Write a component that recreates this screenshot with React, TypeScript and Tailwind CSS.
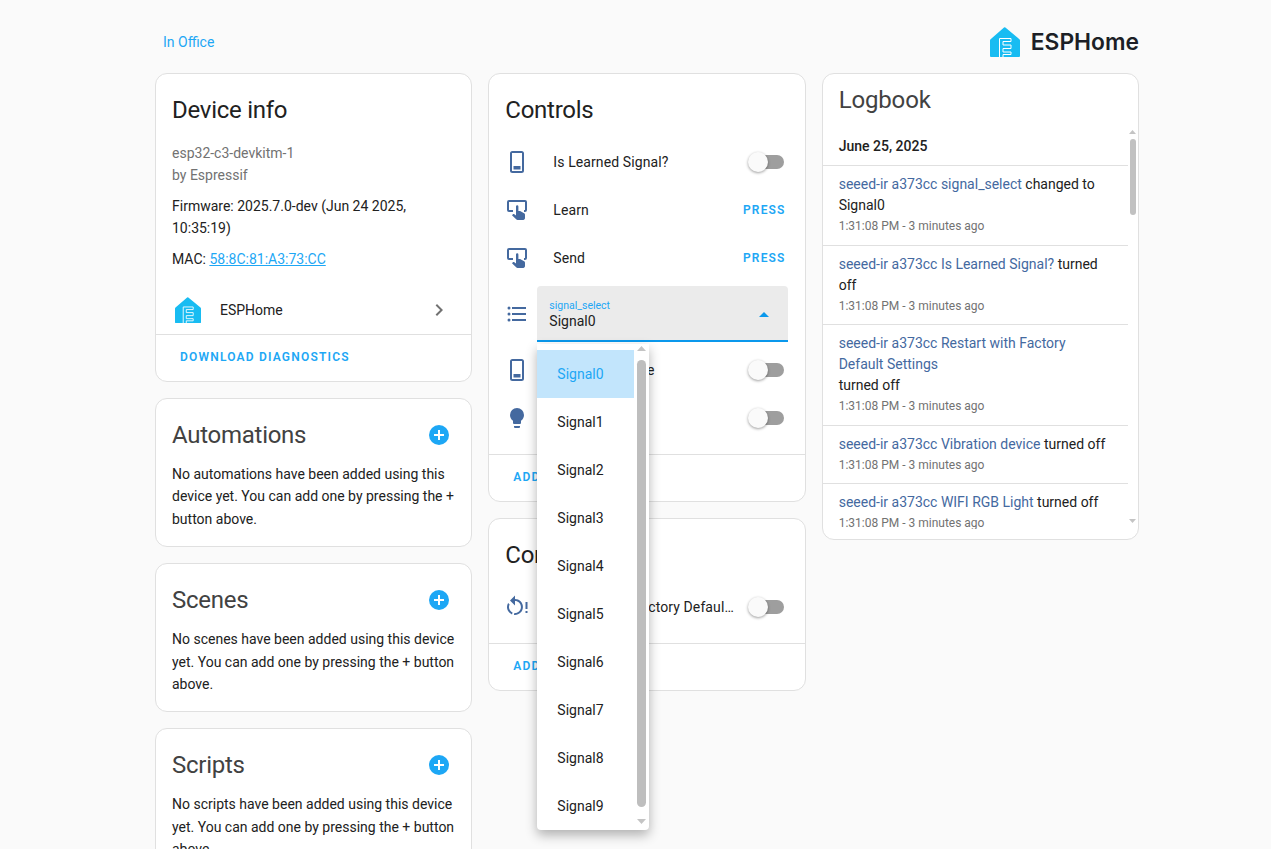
import React from 'react';

const BLUE = '#1da7f5';

const PHONE = 'M7.5 1h9A2.5 2.5 0 0 1 19 3.5v17a2.5 2.5 0 0 1-2.5 2.5h-9A2.5 2.5 0 0 1 5 20.500v-17A2.500 2.500 0 0 1 7.500 1zM7 3v18h10V3H7zM8.500 16h7V19.500h-7z';
const TAP =
  'M4 2h16a2 2 0 0 1 2 2v8a2 2 0 0 1-2 2h-1v-2h1V4H4v8h4v2H4a2 2 0 0 1-2-2V4a2 2 0 0 1 2-2zM11 8.500a1.200 1.200 0 0 1 2.400 0v4.400l1.700.2 4 2.200c.6.300.9.800.9 1.400v3.400c0 1-.7 1.900-1.700 1.900h-5.800c-.4 0-.8-.2-1.100-.5l-4.400-4.300.9-.9c.2-.2.5-.3.800-.3h.3L11 17.500v-9z';
const LIST =
  'M7,5H21V7H7V5M7,13V11H21V13H7M4,4.500A1.500,1.500 0 0,1 5.500,6A1.500,1.500 0 0,1 4,7.500A1.500,1.500 0 0,1 2.500,6A1.500,1.500 0 0,1 4,4.500M4,10.500A1.500,1.500 0 0,1 5.500,12A1.500,1.500 0 0,1 4,13.500A1.500,1.500 0 0,1 2.500,12A1.500,1.500 0 0,1 4,10.500M7,19V17H21V19H7M4,16.500A1.500,1.500 0 0,1 5.500,18A1.500,1.500 0 0,1 4,19.500A1.500,1.500 0 0,1 2.500,18A1.500,1.500 0 0,1 4,16.500Z';
const BULB =
  'M12,2A7,7 0 0,0 5,9C5,11.380 6.190,13.470 8,14.740V17A1,1 0 0,0 9,18H15A1,1 0 0,0 16,17V14.740C17.810,13.470 19,11.380 19,9A7,7 0 0,0 12,2M9,21A1,1 0 0,0 10,22H14A1,1 0 0,0 15,21V20H9V21Z';
const RESTART =
  'M10,4C12.100,4 14.100,4.800 15.600,6.300C18.700,9.400 18.700,14.500 15.600,17.600C13.800,19.500 11.300,20.200 8.900,19.900L9.400,17.900C11.100,18.100 12.900,17.500 14.200,16.200C16.500,13.900 16.500,10.100 14.200,7.700C13.100,6.600 11.500,6 10,6V10.600L5,5.600L10,0.600V4M4.300,17.600C1.700,15 1.300,11 3.100,7.900L4.600,9.400C3.500,11.600 3.900,14.400 5.800,16.200C6.300,16.700 6.900,17.100 7.600,17.400L7,19.400C6,19 5.100,18.400 4.300,17.600ZM20.500,7H22.500V14H20.500ZM20.500,16H22.500V18H20.500Z';

const Icon = ({ d }: { d: string }) => (
  <svg viewBox="0 0 24 24" className="w-6 h-6 shrink-0" fill="#44699f" fillRule="evenodd">
    <path d={d} />
  </svg>
);

const Logo = ({ className }: { className: string }) => (
  <svg viewBox="0 0 30 30" className={className}>
    <path
      d="M14 0.500Q14.700 0 15.400 0.500L29.400 12.200Q30 12.700 30 13.500V29a1 1 0 0 1-1 1H1a1 1 0 0 1-1-1V13.500Q0 12.700 .6 12.200z"
      fill="#18bcf2"
    />
    <path
      d="M9.500 30V11.500H21V14.500H13V18H21V21.500H13V25H21V27.500H13V30"
      fill="none"
      stroke="#fff"
      strokeWidth="1"
    />
  </svg>
);

const Toggle = () => (
  <div className="relative w-9 h-5 mr-[2px] flex items-center justify-end shrink-0">
    <div className="w-[31px] h-3.5 rounded-full bg-[#9e9e9e]" />
    <div className="absolute left-0 top-0 w-5 h-5 rounded-full bg-[#fafafa] shadow-[0_1px_3px_rgba(0,0,0,0.4)]" />
  </div>
);

const Card = ({ children, className = '' }: { children: React.ReactNode; className?: string }) => (
  <div className={`bg-white border border-[#e0e0e0] rounded-xl ${className}`}>{children}</div>
);

const TextButton = ({ children }: { children: React.ReactNode }) => (
  <span className="text-xs font-semibold tracking-[1.2px] uppercase text-[#1da7f5]">{children}</span>
);

const Row = ({ d, label, right }: { d: string; label: string; right: React.ReactNode }) => (
  <div className="h-12 flex items-center pl-4 pr-[19px]">
    <Icon d={d} />
    <span className="ml-6 flex-1 min-w-0 truncate tracking-[0.1px] text-[#212121]">{label}</span>
    {right}
  </div>
);

const Footer = ({ label }: { label: string }) => (
  <div className="border-t border-[#e0e0e0] h-[47px] pb-[2px] flex items-center px-6">
    <TextButton>{label}</TextButton>
  </div>
);

const EmptyCard = ({ title, text }: { title: string; text: string }) => (
  <Card className="px-4 pt-[20px] pb-4">
    <div className="flex items-center justify-between pr-[6px]">
      <h2 className="text-2xl leading-8 tracking-[-0.27px] text-[#424242]">{title}</h2>
      <svg viewBox="0 0 20 20" className="w-5 h-5">
        <circle cx="10" cy="10" r="10" fill={BLUE} />
        <path d="M9 5h2v4h4v2h-4v4H9v-4H5V9h4z" fill="#fff" />
      </svg>
    </div>
    <p className="mt-[12px] leading-[22.400px] text-[#212121]">{text}</p>
  </Card>
);

const signals = ['Signal0', 'Signal1', 'Signal2', 'Signal3', 'Signal4', 'Signal5', 'Signal6', 'Signal7', 'Signal8', 'Signal9'];

const logEntries = [
  { link: 'seeed-ir a373cc signal_select', rest: ' changed to', extra: 'Signal0' },
  { link: 'seeed-ir a373cc Is Learned Signal?', rest: ' turned', extra: 'off' },
  { link: 'seeed-ir a373cc Restart with Factory Default Settings', rest: '', extra: 'turned off' },
  { link: 'seeed-ir a373cc Vibration device', rest: ' turned off', extra: '' },
  { link: 'seeed-ir a373cc WIFI RGB Light', rest: ' turned off', extra: '' },
];

export default function App() {
  return (
    <div className="h-screen overflow-hidden bg-[#fafafa] font-['Roboto',sans-serif] text-sm">
      <div className="ml-[155px] w-[984px]">
        <header className="h-[73px] flex items-center justify-between pl-2 pt-[11px]">
          <span className="text-[#1da7f5]">In Office</span>
          <div className="flex items-center gap-[11px] -mt-[1px]">
            <Logo className="w-[30px] h-[30px]" />
            <span className="font-['Inter',sans-serif] text-[22.800px] leading-none mt-[1px] font-semibold text-[#1c1f26]">
              ESPHome
            </span>
          </div>
        </header>

        <div className="grid grid-cols-3 gap-4 items-start">
          <div className="flex flex-col gap-4">
            <Card>
              <div className="px-4 pt-5 pb-[9px]">
                <h2 className="text-2xl leading-8 tracking-[-0.27px] text-[#212121]">Device info</h2>
                <p className="mt-[16px] leading-[22px] text-[#727272]">
                  esp32-c3-devkitm-1
                  <br />
                  by Espressif
                </p>
                <p className="mt-[8.500px] leading-[22.500px] text-[#212121]">Firmware: 2025.7.0-dev (Jun 24 2025, 10:35:19)</p>
                <p className="mt-[8.500px] leading-[23px] text-[#212121]">
                  MAC: <span className="underline text-[#1da7f5]">58:8C:81:A3:73:CC</span>
                </p>
              </div>
              <div className="h-12 flex items-center pl-[19px] pr-[20px] mt-[6px]">
                <Logo className="w-[26px] h-[26px]" />
                <span className="ml-[19px] flex-1 text-[#212121]">ESPHome</span>
                <svg viewBox="0 0 24 24" className="w-6 h-6" fill="#727272">
                  <path d="M8.590,16.580L13.170,12L8.590,7.410L10,6L16,12L10,18L8.590,16.580Z" />
                </svg>
              </div>
              <Footer label="Download diagnostics" />
            </Card>
            <EmptyCard title="Automations" text="No automations have been added using this device yet. You can add one by pressing the + button above." />
            <EmptyCard title="Scenes" text="No scenes have been added using this device yet. You can add one by pressing the + button above." />
            <EmptyCard title="Scripts" text="No scripts have been added using this device yet. You can add one by pressing the + button above." />
          </div>

          <div className="flex flex-col gap-4">
            <Card>
              <h2 className="px-4 pt-5 pb-[12px] text-2xl leading-8 tracking-[-0.27px] text-[#212121]">Controls</h2>
              <Row d={PHONE} label="Is Learned Signal?" right={<Toggle />} />
              <Row d={TAP} label="Learn" right={<TextButton>Press</TextButton>} />
              <Row d={TAP} label="Send" right={<TextButton>Press</TextButton>} />
              <div className="flex items-center pl-4 pr-[17px] py-1">
                <Icon d={LIST} />
                <div className="relative ml-2 flex-1 h-14 bg-[#ebebeb] rounded-t border-b-2 border-[#0a98ec] pl-3 pr-[19px] flex items-center justify-between">
                  <div>
                    <div className="text-[10.500px] leading-3 mt-[3px] text-[#1da7f5]">signal_select</div>
                    <div className="leading-[18px] text-[#212121]">Signal0</div>
                  </div>
                  <svg viewBox="0 0 10 5" className="w-[10px] h-[5px] mt-[2px]">
                    <path d="M0 5L5 0L10 5z" fill="#0a98ec" />
                  </svg>

                  <div className="absolute z-10 left-0 top-[58px] w-[112px] h-[486px] pt-[6px] bg-white rounded-b shadow-[0_5px_12px_rgba(0,0,0,0.3)]">
                    {signals.map((signal, index) => (
                      <div
                        key={signal}
                        className={`w-[97px] h-12 pl-5 flex items-center ${
                          index === 0 ? 'bg-[#c2e5fc] text-[#1da7f5]' : 'text-[#212121]'
                        }`}
                      >
                        {signal}
                      </div>
                    ))}
                    <div className="absolute right-[3px] top-[16px] w-[9px] h-[447px] rounded-full bg-[#bebebe]" />
                    <svg viewBox="0 0 9 5" className="absolute right-[3px] top-[2px] w-[9px] h-[5px]">
                      <path d="M0 5L4.500 0L9 5z" fill="#c4c4c4" />
                    </svg>
                    <svg viewBox="0 0 9 5" className="absolute right-[3px] bottom-[6px] w-[9px] h-[5px]">
                      <path d="M0 0L4.500 5L9 0z" fill="#c4c4c4" />
                    </svg>
                  </div>
                </div>
              </div>
              <Row d={PHONE} label="Vibration device" right={<Toggle />} />
              <Row d={BULB} label="WIFI RGB Light" right={<Toggle />} />
              <div className="mt-3">
                <Footer label="Add to dashboard" />
              </div>
            </Card>
            <Card>
              <h2 className="px-4 pt-5 pb-[12px] text-2xl leading-8 tracking-[-0.27px] text-[#212121]">Configuration</h2>
              <Row d={RESTART} label="Restart with Factory Default Settings" right={<div className="ml-3"><Toggle /></div>} />
              <div className="mt-3">
                <Footer label="Add to dashboard" />
              </div>
            </Card>
          </div>

          <Card className="h-[467px] relative">
            <h2 className="px-4 pt-[10px] text-2xl leading-8 tracking-[-0.15px] text-[#424242]">Logbook</h2>
            <div className="mt-[12px] h-[401px] mr-[10px] overflow-hidden">
              <div className="h-[38px] pl-4 pb-[2px] flex items-center font-medium text-[#212121] border-b border-[#e0e0e0]">June 25, 2025</div>
              {logEntries.map((entry) => (
                <div key={entry.link} className="pl-4 pr-4 pt-2 pb-[8.500px] border-b border-[#e0e0e0] leading-[21px] text-[#212121]">
                  <div>
                    <span className="text-[#44699f]">{entry.link}</span>
                    {entry.rest}
                  </div>
                  {entry.extra && <div>{entry.extra}</div>}
                  <div className="text-xs leading-[20px] text-[#727272]">1:31:08 PM - 3 minutes ago</div>
                </div>
              ))}
            </div>
            <div className="absolute right-[2px] top-[65px] w-[6px] h-[76px] rounded-full bg-[#c1c1c1]" />
            <svg viewBox="0 0 7 4" className="absolute right-[2px] top-[56px] w-[7px] h-[4px]">
              <path d="M0 4L3.500 0L7 4z" fill="#c4c4c4" />
            </svg>
            <svg viewBox="0 0 7 4" className="absolute right-[2px] bottom-[16px] w-[7px] h-[4px]">
              <path d="M0 0L3.500 4L7 0z" fill="#c4c4c4" />
            </svg>
          </Card>
        </div>
      </div>
    </div>
  );
}
